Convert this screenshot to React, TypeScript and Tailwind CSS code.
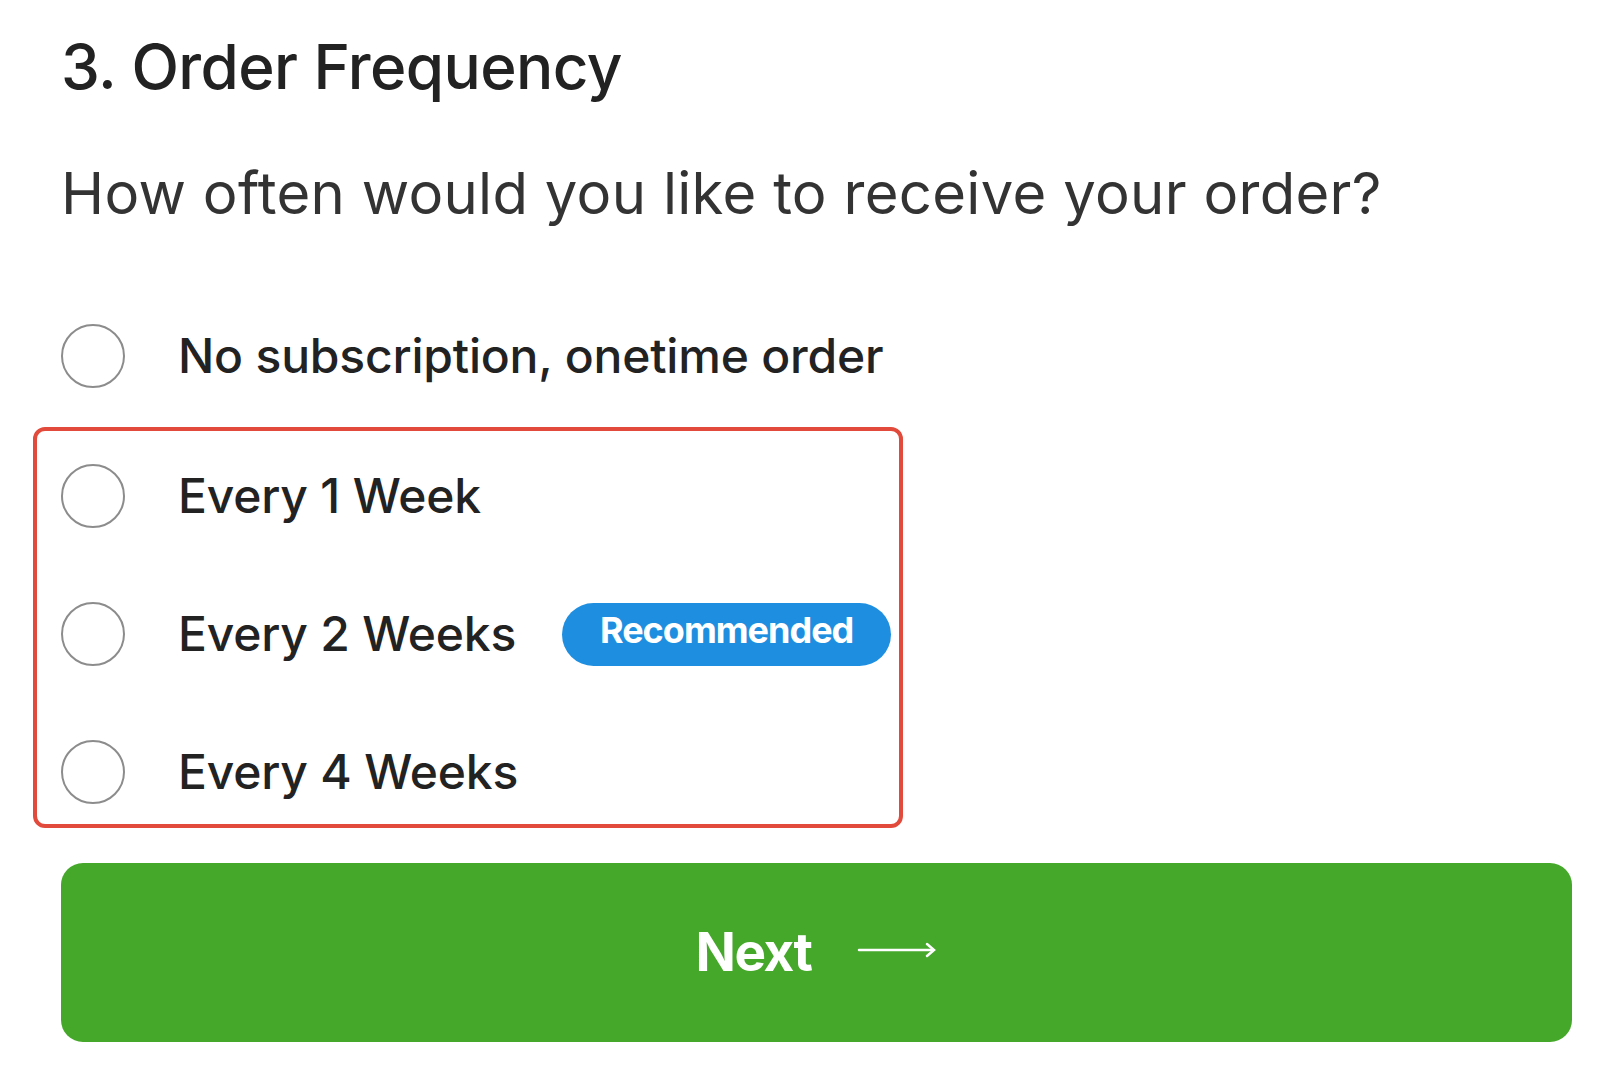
import React from "react";

interface Option {
  id: string;
  label: string;
  badge?: string;
}

const single: Option = { id: "once", label: "No subscription, onetime order" };

const subs: Option[] = [
  { id: "w1", label: "Every 1 Week" },
  { id: "w2", label: "Every 2 Weeks", badge: "Recommended" },
  { id: "w4", label: "Every 4 Weeks" },
];

function Row({ option }: { option: Option }) {
  return (
    <label className="flex h-[100px] items-center">
      <span className="h-[64px] w-[64px] shrink-0 rounded-full border-2 border-[#8c8c8c] bg-white" />
      <span className="ml-[53px] shrink-0 whitespace-nowrap text-[48px] leading-none font-medium tracking-[-0.2px] text-[#222222]">
        {option.label}
      </span>
      {option.badge && (
        <span className="ml-[46px] flex h-[63px] w-[329px] shrink-0 items-center justify-center rounded-full bg-[#1e8fe0] pb-[8px] text-[36px] leading-none font-bold tracking-[-1px] text-white">
          {option.badge}
        </span>
      )}
    </label>
  );
}

export default function App() {
  return (
    <div className="min-h-[1081px] w-full bg-white pl-[61px] pr-[45px] pt-[36px] font-['Inter',sans-serif]">
      <h1 className="text-[62px] leading-none font-medium tracking-[-0.6px] text-[#222222]">3. Order Frequency</h1>
      <p className="mt-[66px] text-[58px] leading-none font-normal tracking-[0.3px] text-[#333333]">
        How often would you like to receive your order?
      </p>

      <div className="mt-[84px]">
        <Row option={single} />
      </div>

      <div className="-ml-[28px] mt-[21px] flex w-[870px] flex-col gap-[38px] rounded-[12px] border-4 border-[#e24b3b] pb-[2px] pl-[24px] pt-[15px]">
        {subs.map((o) => (
          <Row key={o.id} option={o} />
        ))}
      </div>

      <button className="mt-[35px] flex h-[179px] w-full items-center justify-center rounded-[22px] bg-[#45a82a] text-white">
        <span className="text-[53px] leading-none font-bold tracking-[-1.5px]">Next</span>
        <svg className="ml-[46px] -mt-[6px]" width="80" height="20" viewBox="0 0 80 20" fill="none" stroke="white" strokeWidth="2.5" strokeLinecap="round">
          <path d="M2 10H76" />
          <path d="M70 4L77 10L70 16" />
        </svg>
      </button>
    </div>
  );
}
